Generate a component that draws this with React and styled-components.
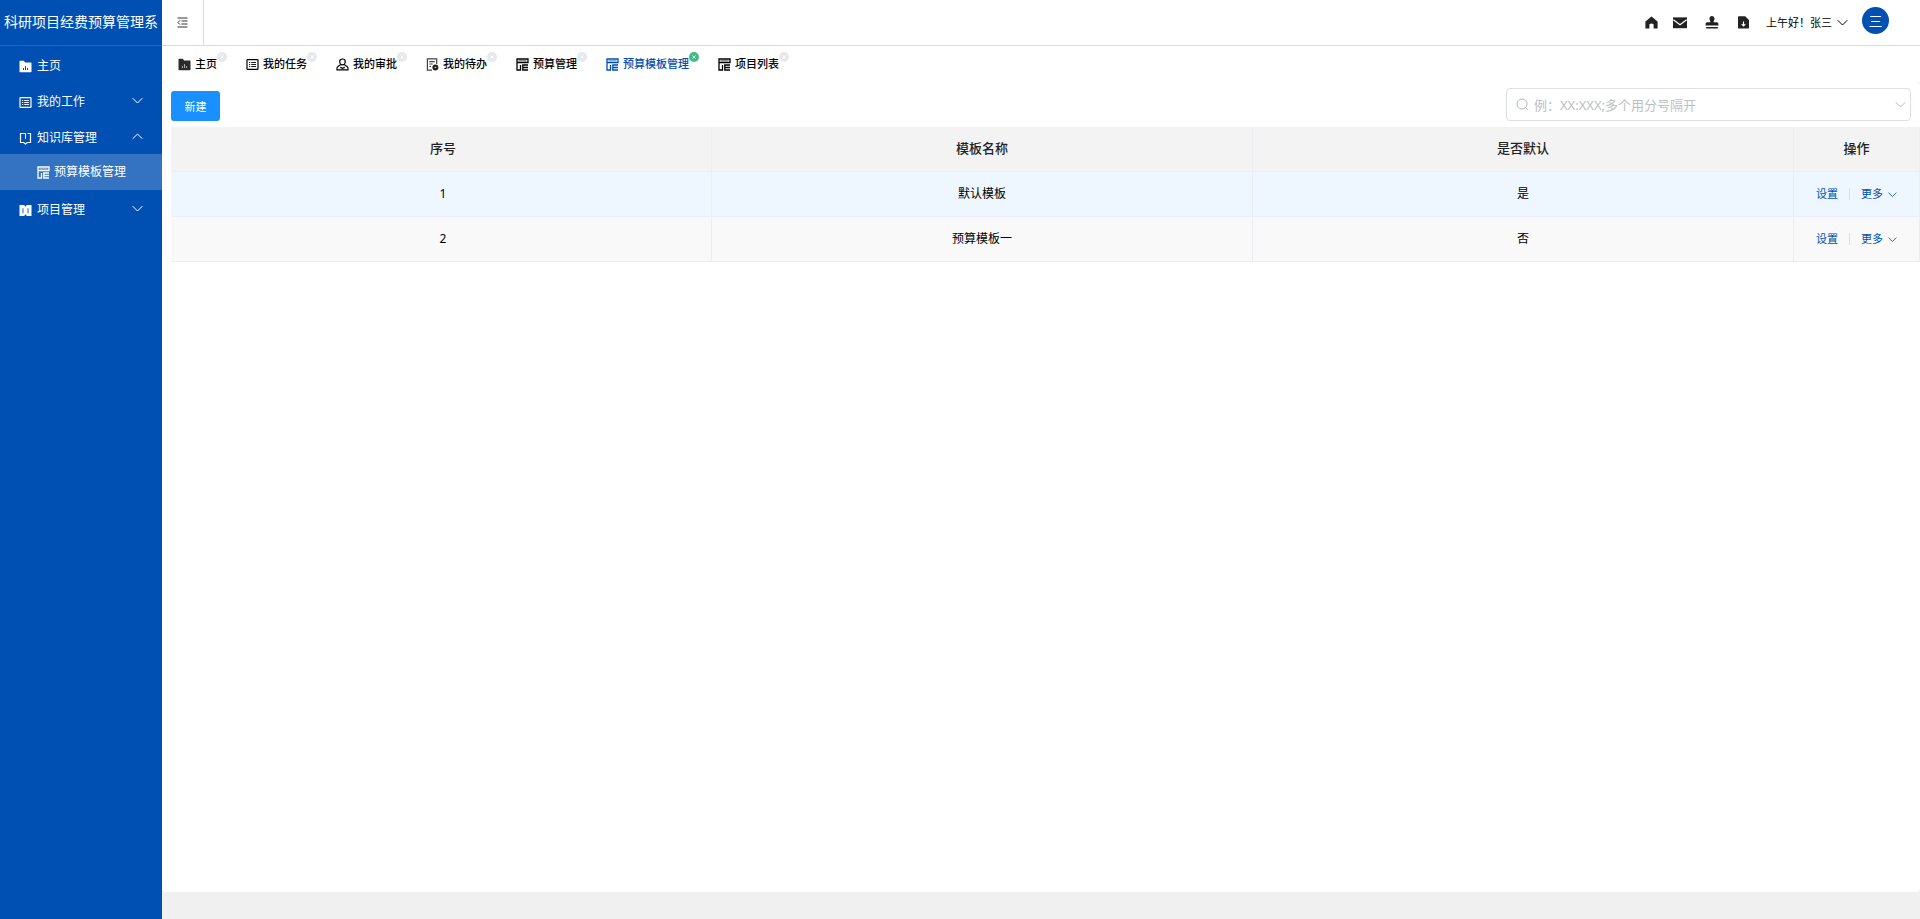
import React from "react";
import styled, { createGlobalStyle } from "styled-components";

const GlobalStyle = createGlobalStyle`
  *, *::before, *::after { box-sizing: border-box; }
  body {
    margin: 0;
    background: #f0f0f0;
    color: #000;
    font-family: "Noto Sans", "Noto Sans CJK SC", sans-serif;
    font-size: 12px;
  }
  button, input { font-family: inherit; }
  button { border: 0; padding: 0; background: none; cursor: pointer; color: inherit; }
  a { color: inherit; text-decoration: none; }
`;

const Layout = styled.div`
  display: flex;
  min-height: 100vh;
`;

const Sidebar = styled.aside`
  flex: 0 0 162px;
  background: #0050b3;
  color: #fff;
`;

const Brand = styled.h1`
  margin: 0;
  height: 46px;
  padding-bottom: 4px;
  display: flex;
  align-items: center;
  justify-content: center;
  border-bottom: 1px solid #1e65bd;
  font-size: 14px;
  font-weight: 400;
  white-space: nowrap;
  overflow: hidden;
`;

const MenuList = styled.ul`
  list-style: none;
  margin: 0;
  padding: 0;
`;

const MenuRow = styled.a`
  display: flex;
  align-items: center;
  justify-content: space-between;
  height: 36px;
  padding: 0 19px 0 ${(p) => (p.$nested ? 37 : 19)}px;
  background: ${(p) => (p.$active ? "#3373c2" : "transparent")};
`;

const MenuLabel = styled.span`
  display: flex;
  align-items: center;
  gap: ${(p) => (p.$nested ? 4 : 5)}px;
  padding-top: ${(p) => (p.$nested ? 0 : 4)}px;
  line-height: 18px;
`;

const Main = styled.div`
  flex: 1;
  min-width: 0;
  display: flex;
  flex-direction: column;
`;

const TopBar = styled.header`
  display: flex;
  align-items: stretch;
  justify-content: space-between;
  height: 46px;
  background: #fff;
  border-bottom: 1px solid #ddd;
`;

const CollapseButton = styled.button`
  width: 42px;
  display: flex;
  align-items: center;
  justify-content: center;
  border-right: 1px solid #ddd;
  color: #333;
`;

const UserArea = styled.div`
  display: flex;
  align-items: center;
  padding-right: 31px;
`;

const HeaderIcons = styled.div`
  display: flex;
  align-items: center;
  gap: 15px;
  margin-right: 16px;
  color: #222;
`;

const IconButton = styled.button`
  display: flex;
`;

const UserButton = styled.button`
  display: flex;
  align-items: center;
  gap: 5px;
  margin-right: 14px;
  font-size: 11px;
  line-height: 16px;
`;

const Avatar = styled.div`
  display: flex;
  align-items: center;
  justify-content: center;
  width: 27px;
  height: 27px;
  margin-bottom: 4px;
  border-radius: 50%;
  background: #0050b3;
  color: #fff;
  font-size: 14px;
  line-height: 20px;
`;

const TabBar = styled.nav`
  display: flex;
  align-items: center;
  gap: 29px;
  height: 36px;
  padding: 0 16px;
  background: #fff;
`;

const Tab = styled.div`
  position: relative;
  color: ${(p) => (p.$active ? "#0050b3" : "#000")};
`;

const TabLink = styled.a`
  display: flex;
  align-items: center;
  gap: 4px;
  font-size: 11px;
  font-weight: 500;
  line-height: 16px;
  white-space: nowrap;
`;

const TabClose = styled.button`
  position: absolute;
  top: -4px;
  right: -10px;
  width: 10px;
  height: 10px;
  display: flex;
  align-items: center;
  justify-content: center;
  border-radius: 50%;
  background: ${(p) => (p.$active ? "#42b983" : "#e6e8eb")};
  color: #fff;
`;

const Panel = styled.main`
  flex: 1;
  padding: 6px 0 0 9px;
  background: #fff;
  border-radius: 4px;
`;

const Footer = styled.footer`
  height: 27px;
`;

const Toolbar = styled.div`
  display: flex;
  align-items: flex-end;
  justify-content: space-between;
  padding-right: 9px;
  margin-bottom: 6px;
`;

const PrimaryButton = styled.button`
  width: 49px;
  height: 30px;
  border-radius: 3px;
  background: #1890ff;
  color: #fff;
  font-size: 11px;
`;

const SearchBox = styled.label`
  display: flex;
  align-items: center;
  gap: 5px;
  width: 405px;
  height: 33px;
  padding: 0 4px 0 9px;
  border: 1px solid #dcdfe6;
  border-radius: 4px;
  color: #b4b8c0;
`;

const SearchInput = styled.input`
  flex: 1;
  min-width: 0;
  border: 0;
  padding: 0;
  outline: 0;
  background: none;
  color: #333;
  font-size: 13px;
  &::placeholder { color: #bbbec6; opacity: 1; }
`;

const Table = styled.table`
  width: 100%;
  table-layout: fixed;
  border-collapse: separate;
  border-spacing: 0;
  text-align: center;
`;

const ActionCol = styled.col`
  width: 126px;
`;

const HeadCell = styled.th`
  height: 45px;
  padding: 0 0 4px;
  background: #f3f3f3;
  border-right: 1px solid #ebeef5;
  border-bottom: 1px solid #ebeef5;
  color: #222;
  font-size: 13px;
  font-weight: 500;
  &:first-child { padding-left: 4px; }
`;

const BodyRow = styled.tr`
  background: ${(p) => (p.$highlight ? "#eef7ff" : "#f9f9f9")};
`;

const Cell = styled.td`
  height: 45px;
  padding: 0 0 2px;
  border-right: 1px solid #ebeef5;
  border-bottom: 1px solid #ebeef5;
  &:first-child { padding-left: 4px; }
  &:last-child { padding-bottom: 0; }
`;

const Actions = styled.div`
  display: flex;
  align-items: center;
  justify-content: center;
  gap: 11px;
  color: #0050b3;
  font-size: 11px;
  line-height: 16px;
`;

const Divider = styled.span`
  width: 1px;
  height: 12px;
  background: #dcdfe6;
`;

const MoreButton = styled.button`
  display: flex;
  align-items: center;
  gap: 5px;
  font-size: 11px;
  line-height: 16px;
`;

const Svg = ({ w = 13, h = 13, box = "0 0 13 13", children }) => (
  <svg width={w} height={h} viewBox={box} fill="none" stroke="currentColor" strokeWidth="1.2" aria-hidden="true">
    {children}
  </svg>
);

const Chevron = ({ size = 11, up = false }) => (
  <Svg w={size} h={size} box="0 0 11 11">
    <path d={up ? "M.7 7.8 5.5 3l4.8 4.8" : "M.7 3.2 5.5 8l4.8-4.8"} strokeWidth="1" />
  </Svg>
);

const FolderIcon = ({ fill = "#2b2b2b", bars = "#aaa" }) => (
  <Svg>
    <path d="M.5 1.5Q.5.8 1.2.8h3.6l1.3 1.6h5.6q.8 0 .8.8v8.3q0 .8-.8.8H1.2q-.7 0-.7-.8z" fill={fill} stroke="none" />
    <path d="M4.5 10V8M6.5 10V6M8.5 10V8" stroke={bars} strokeWidth="1" />
  </Svg>
);

const ListIcon = () => (
  <Svg>
    <rect x="1" y="1.6" width="11" height="9.8" rx=".6" />
    <path d="M3 4.5h1.2M5.2 4.5H10M3 6.5h1.2M5.2 6.5H10M3 8.5h1.2M5.2 8.5H10" strokeWidth=".9" />
  </Svg>
);

const PersonIcon = () => (
  <Svg>
    <path d="M6.5 1C8.300 1 9.300 2.300 9.300 3.700S8.100 6.800 6.500 6.800 3.700 5.100 3.700 3.700 4.700 1 6.500 1z" />
    <path d="M4.800 6.400 2 8.400Q1 9.100 1 10.200v1.600h11v-1.600q0-1.100-1-1.800L8.200 6.400M4.200 9.400l2.300 1 2.300-1" />
  </Svg>
);

const TodoIcon = () => (
  <Svg>
    <path d="M6 12.200H1.400V.9h9.300v5M3.300 3.600h5.400M3.300 6h3.400M3.300 8.500H5" stroke="#444" />
    <circle cx="9.400" cy="9.400" r="3" fill="#222" stroke="none" />
    <path d="M8.600 9.400h1.800" stroke="#fff" strokeWidth=".8" />
  </Svg>
);

const TemplateIcon = () => (
  <Svg>
    <path d="M1 4.500V1h11v3.500zM1 4.500V12h3.500V7M12 7H6.800v5H12M6.800 9.500H12" strokeWidth="1.300" />
    <path d="M2.500 2.800h8" strokeWidth=".9" opacity=".7" />
  </Svg>
);

const BookIcon = () => (
  <Svg>
    <path d="M4.600 1.500H1.500v9h3.200l1.800 1.400 1.800-1.400h3.200v-9H8.600" />
    <path d="M4.300 1.500h2.200v5.300" strokeWidth="1" />
  </Svg>
);

const OpenBookIcon = () => (
  <Svg>
    <path d="M.5 1h4.700l1.300 1.800L7.800 1h4.700v11H7.800l-1.300-1.800L5.200 12H.5z" fill="currentColor" stroke="none" />
    <path d="M4 4.200v5M9 4.200v5" stroke="#2e86d8" strokeWidth="1.200" />
  </Svg>
);

const CollapseIcon = () => (
  <Svg w={11} h={11} box="0 0 11 11">
    <path d="M.5 1h10M4.500 4h6M4.500 7h6M.5 10h10M3 3.400 1 5.500l2 2.100" strokeWidth="1" />
  </Svg>
);

const HomeIcon = () => (
  <Svg>
    <path d="M6.500.4 12.600 5.400v7.200H8.600V8.200Q6.500 6.600 4.400 8.200v4.400H.4V5.400z" fill="currentColor" stroke="none" />
  </Svg>
);

const MailIcon = () => (
  <Svg w={14} box="0 0 14 13">
    <rect x="0" y="1.400" width="14" height="10.800" fill="currentColor" stroke="none" />
    <path d="M.3 3.600 7 8.800l6.700-5.200" stroke="#fff" />
  </Svg>
);

const StampIcon = () => (
  <Svg w={20} box="-3 0 20 13">
    <path d="M4.500 2.500a2.500 2.500 0 0 1 5 0c0 1.700-.9 2-.9 3.800h3.200q1.600 0 1.600 1.500v1.800H.6V7.800q0-1.500 1.600-1.500h3.200C5.400 4.500 4.500 4.200 4.500 2.500zM1.200 11h11.600v1.500H1.200z" fill="currentColor" stroke="none" />
  </Svg>
);

const DownloadIcon = () => (
  <Svg>
    <path d="M1 1.100Q1 .3 1.800.3h6.400L12 4v7.700q0 .9-.8.9H1.800q-.8 0-.8-.9z" fill="currentColor" stroke="none" />
    <path d="M6.500 5.500v4.300M4.700 8.200l1.800 1.800 1.800-1.800" stroke="#fff" strokeWidth="1.100" />
  </Svg>
);

const SearchIcon = () => (
  <Svg>
    <circle cx="6" cy="6" r="5" strokeWidth="1" />
    <path d="m9.600 9.800 2.200 2.200" strokeWidth="1" />
  </Svg>
);

const CloseIcon = () => (
  <Svg w={4} h={4} box="0 0 4 4">
    <path d="m.5.5 3 3m0-3-3 3" strokeWidth="1" />
  </Svg>
);

const menu = [
  { label: "主页", icon: <FolderIcon fill="#fff" bars="#0050b3" /> },
  { label: "我的工作", icon: <ListIcon />, open: false },
  {
    label: "知识库管理",
    icon: <BookIcon />,
    open: true,
    children: [{ label: "预算模板管理", icon: <TemplateIcon />, active: true }],
  },
  { label: "项目管理", icon: <OpenBookIcon />, open: false },
];

const tabs = [
  { label: "主页", icon: <FolderIcon /> },
  { label: "我的任务", icon: <ListIcon /> },
  { label: "我的审批", icon: <PersonIcon /> },
  { label: "我的待办", icon: <TodoIcon /> },
  { label: "预算管理", icon: <TemplateIcon /> },
  { label: "预算模板管理", icon: <TemplateIcon />, active: true },
  { label: "项目列表", icon: <TemplateIcon /> },
];

const shortcuts = [
  { label: "首页", icon: <HomeIcon /> },
  { label: "邮件", icon: <MailIcon /> },
  { label: "审批", icon: <StampIcon /> },
  { label: "下载", icon: <DownloadIcon /> },
];

const rows = [
  { id: 1, name: "默认模板", isDefault: true },
  { id: 2, name: "预算模板一", isDefault: false },
];

function MenuItem({ item, nested }) {
  return (
    <li>
      <MenuRow href="#" $nested={nested} $active={item.active}>
        <MenuLabel $nested={nested}>
          {item.icon}
          {item.label}
        </MenuLabel>
        {item.open !== undefined && <Chevron up={item.open} />}
      </MenuRow>
      {item.children && (
        <MenuList>
          {item.children.map((child) => (
            <MenuItem key={child.label} item={child} nested />
          ))}
        </MenuList>
      )}
    </li>
  );
}

export default function App() {
  return (
    <>
      <GlobalStyle />
      <Layout>
        <Sidebar>
          <Brand>科研项目经费预算管理系</Brand>
          <MenuList>
            {menu.map((item) => (
              <MenuItem key={item.label} item={item} />
            ))}
          </MenuList>
        </Sidebar>
        <Main>
          <TopBar>
            <CollapseButton aria-label="收起菜单">
              <CollapseIcon />
            </CollapseButton>
            <UserArea>
              <HeaderIcons>
                {shortcuts.map((s) => (
                  <IconButton key={s.label} aria-label={s.label}>
                    {s.icon}
                  </IconButton>
                ))}
              </HeaderIcons>
              <UserButton>
                上午好！张三
                <Chevron />
              </UserButton>
              <Avatar>三</Avatar>
            </UserArea>
          </TopBar>
          <TabBar>
            {tabs.map((tab) => (
              <Tab key={tab.label} $active={tab.active}>
                <TabLink href="#">
                  {tab.icon}
                  {tab.label}
                </TabLink>
                <TabClose $active={tab.active} aria-label={`关闭${tab.label}`}>
                  <CloseIcon />
                </TabClose>
              </Tab>
            ))}
          </TabBar>
          <Panel>
            <Toolbar>
              <PrimaryButton>新建</PrimaryButton>
              <SearchBox>
                <SearchIcon />
                <SearchInput type="text" aria-label="搜索" placeholder="例：XX:XXX;多个用分号隔开" />
                <Chevron />
              </SearchBox>
            </Toolbar>
            <Table>
              <colgroup>
                <col />
                <col />
                <col />
                <ActionCol />
              </colgroup>
              <thead>
                <tr>
                  <HeadCell scope="col">序号</HeadCell>
                  <HeadCell scope="col">模板名称</HeadCell>
                  <HeadCell scope="col">是否默认</HeadCell>
                  <HeadCell scope="col">操作</HeadCell>
                </tr>
              </thead>
              <tbody>
                {rows.map((row) => (
                  <BodyRow key={row.id} $highlight={row.isDefault}>
                    <Cell>{row.id}</Cell>
                    <Cell>{row.name}</Cell>
                    <Cell>{row.isDefault ? "是" : "否"}</Cell>
                    <Cell>
                      <Actions>
                        <a href="#">设置</a>
                        <Divider />
                        <MoreButton>
                          更多
                          <Chevron size={9} />
                        </MoreButton>
                      </Actions>
                    </Cell>
                  </BodyRow>
                ))}
              </tbody>
            </Table>
          </Panel>
          <Footer />
        </Main>
      </Layout>
    </>
  );
}
